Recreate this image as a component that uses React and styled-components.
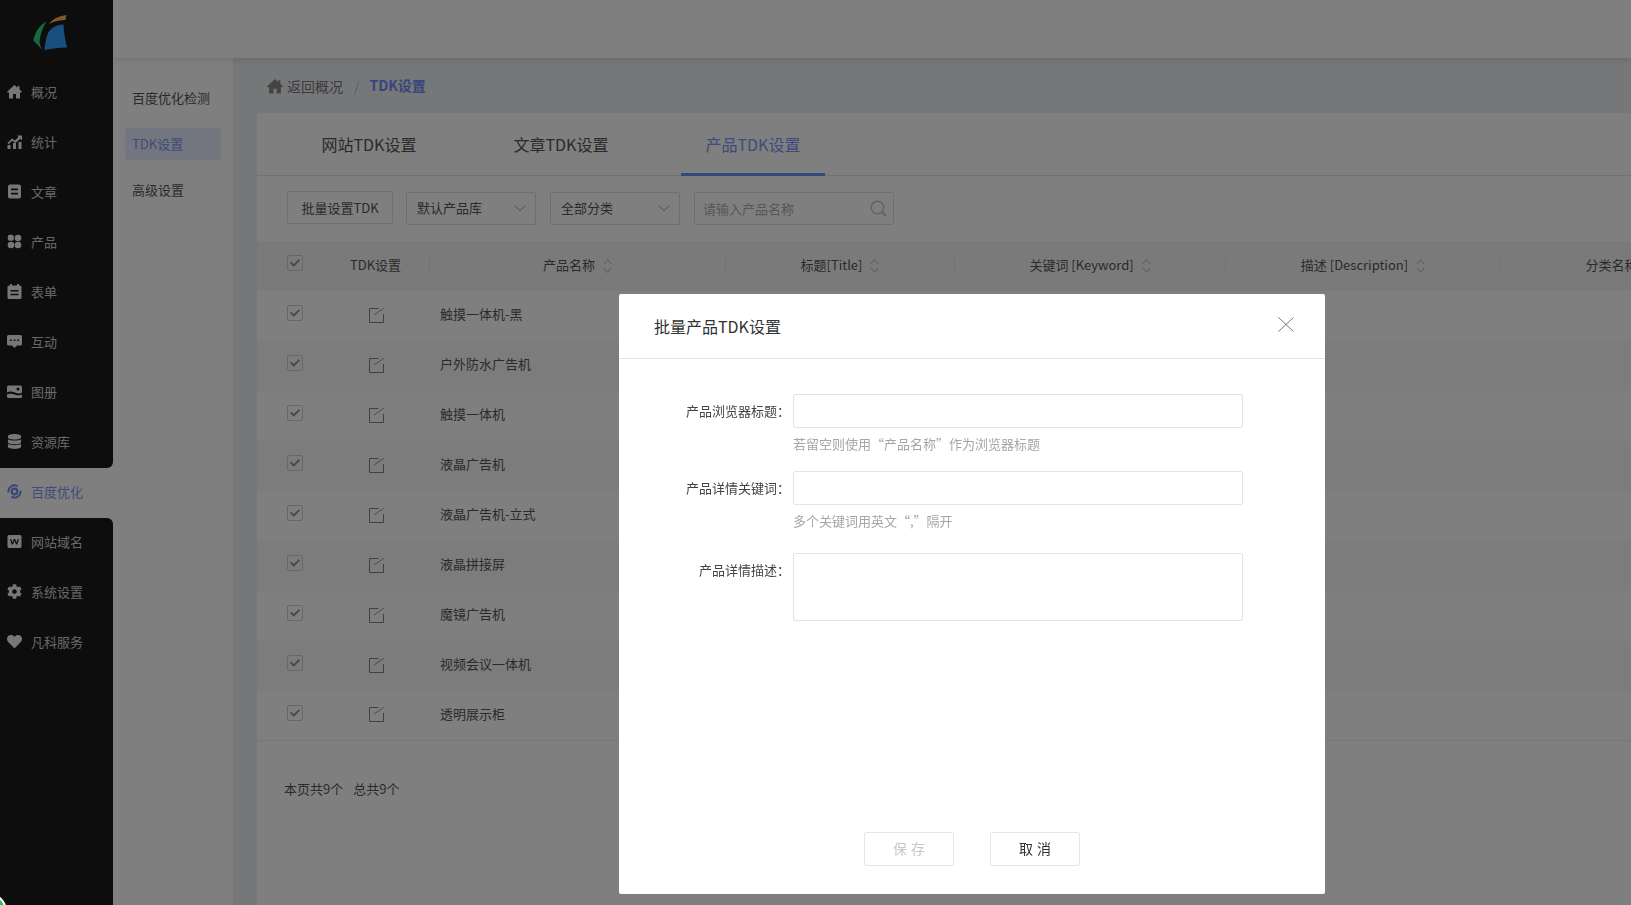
import React from "react";
import styled, { createGlobalStyle } from "styled-components";
import { FaCheck, FaDatabase, FaCog, FaHeart } from "react-icons/fa";

const GlobalStyle = createGlobalStyle`
  html, body {
    margin: 0;
    padding: 0;
    height: 100%;
    overflow: hidden;
    background: #fff;
    font-family: "Noto Sans CJK SC", "Open Sans", sans-serif;
    font-size: 13px;
    color: #555;
  }
  * {
    box-sizing: border-box;
  }
`;

const Page = styled.div`
  display: flex;
  width: 100vw;
  height: 100vh;
  overflow: hidden;
`;

const Sidebar = styled.aside`
  flex: 0 0 113px;
  display: flex;
  flex-direction: column;
  background: #fff;
`;

const SideGroup = styled.div`
  background: #1b1b1c;
  border-radius: ${(p) => (p.$bottom ? "0 6px 0 0" : "0 0 6px 0")};
  flex: ${(p) => (p.$bottom ? 1 : "none")};
`;

const LogoBox = styled.div`
  height: 68px;
  padding: 15px 0 0 33px;
`;

const SideItem = styled.div`
  height: 50px;
  display: flex;
  align-items: center;
  padding: 0 0 3px 7px;
  gap: 9px;
  color: ${(p) => (p.$active ? "#7f97f5" : "#d0d0d0")};
  background: ${(p) => (p.$active ? "#fff" : "transparent")};
  font-size: 13px;

  svg {
    flex: 0 0 15px;
    width: 15px;
    height: 15px;
    color: ${(p) => (p.$active ? "#6f8cf5" : "#eeeef2")};
  }
`;

const Main = styled.div`
  flex: 1;
  min-width: 0;
  display: flex;
  flex-direction: column;
`;

const TopBar = styled.header`
  flex: 0 0 58px;
  background: #fff;
  box-shadow: 0 2px 6px rgba(0, 0, 0, 0.12);
  position: relative;
`;

const Body = styled.div`
  flex: 1;
  min-height: 0;
  display: flex;
`;

const SubNav = styled.nav`
  flex: 0 0 120px;
  background: #fff;
  padding: 24px 12px 0;
`;

const SubItem = styled.div`
  height: 32px;
  line-height: 31px;
  margin-bottom: 14px;
  padding-left: 7px;
  border-radius: 2px;
  color: ${(p) => (p.$active ? "#7f97f5" : "#555")};
  background: ${(p) => (p.$active ? "#e6ebff" : "transparent")};
`;

const Content = styled.main`
  flex: 1;
  min-width: 0;
  background: #eceef2;
  padding-left: 24px;
  display: flex;
  flex-direction: column;
`;

const Breadcrumb = styled.div`
  flex: 0 0 55px;
  display: flex;
  align-items: center;
  padding: 1px 0 0 10px;
  font-size: 14px;
  color: #777;

  svg {
    width: 16px;
    height: 16px;
    margin-right: 4px;
    color: #888;
  }
`;

const CrumbSep = styled.span`
  margin: 0 10px 0 11px;
  color: #bbb;
`;

const CrumbNow = styled.b`
  color: #6f8cf5;
  font-weight: 700;
  margin-top: -2px;
`;

const Panel = styled.section`
  flex: 1;
  min-height: 0;
  background: #fff;
  overflow: hidden;
`;

const Tabs = styled.div`
  height: 63px;
  display: flex;
  gap: 48px;
  padding-left: 40px;
  border-bottom: 1px solid #e4e4e4;
`;

const Tab = styled.div`
  width: 144px;
  height: 63px;
  line-height: 62px;
  text-align: center;
  font-size: 16px;
  color: ${(p) => (p.$active ? "#7f97f5" : "#555")};
  border-bottom: 3px solid ${(p) => (p.$active ? "#6690ff" : "transparent")};
`;

const Toolbar = styled.div`
  height: 65px;
  display: flex;
  align-items: flex-start;
  padding: 15px 0 0 30px;
  gap: 13px;
`;

const BatchButton = styled.div`
  width: 106px;
  height: 33px;
  line-height: 31px;
  text-align: center;
  border: 1px solid #dfdfdf;
  border-radius: 2px;
  color: #555;
`;

const SelectBox = styled.div`
  width: 130px;
  height: 33px;
  margin: 1px 1px 0 0;
  padding: 0 9px 2px 10px;
  display: flex;
  align-items: center;
  justify-content: space-between;
  border: 1px solid #dfdfdf;
  border-radius: 2px;
  color: #555;
`;

const SearchBox = styled(SelectBox)`
  width: 200px;
  padding: 0 6px 0 8px;
  color: #adadad;
`;

const TableGrid = styled.div`
  width: 1482px;
  display: grid;
  grid-template-columns: 65px 108px 296px 229px 271px 275px 238px;
  height: 50px;
  align-items: center;
  background: ${(p) => (p.$head ? "#f5f5f5" : p.$alt ? "#f8f8f8" : "#fff")};
  border-bottom: ${(p) => (p.$last ? "1px solid #eee" : "none")};
`;

const CheckCell = styled.div`
  padding: 0 0 6px 30px;
  display: flex;
`;

const CheckBoxMark = styled.span`
  width: 16px;
  height: 16px;
  border: 1px solid #cfcfcf;
  border-radius: 2px;
  display: flex;
  align-items: center;
  justify-content: center;
  color: #94949a;

  svg {
    width: 10px;
    height: 10px;
  }
`;

const HeadCell = styled.div`
  height: 16px;
  display: flex;
  align-items: center;
  justify-content: center;
  gap: 8px;
  white-space: nowrap;
  border-right: ${(p) => (p.$divider ? "1px solid #e4e4e4" : "none")};
`;

const HeadLabel = styled.span`
  margin-bottom: 4px;
`;

const EditCell = styled.div`
  display: flex;
  justify-content: center;
  padding: 0 0 2px 1px;
  color: #808080;
`;

const NameCell = styled.div`
  padding: 0 0 5px 10px;
`;

const TableFoot = styled.div`
  display: flex;
  gap: 10px;
  padding: 39px 0 0 27px;
  line-height: 18px;
`;

const Overlay = styled.div`
  position: fixed;
  inset: 0;
  background: rgba(0, 0, 0, 0.5);
`;

const Modal = styled.div`
  position: fixed;
  left: 619px;
  top: 294px;
  width: 706px;
  height: 600px;
  background: #fff;
  border-radius: 2px;
  display: flex;
  flex-direction: column;
  color: #333;
`;

const ModalHead = styled.div`
  flex: 0 0 65px;
  display: flex;
  align-items: center;
  justify-content: space-between;
  padding: 0 31px 0 35px;
  border-bottom: 1px solid #e6e6e6;
  font-size: 16px;
  color: #333;

  svg {
    margin-bottom: 3px;
  }
`;

const ModalForm = styled.div`
  padding-top: 35px;
  flex: 1;
`;

const FormRow = styled.div`
  display: grid;
  grid-template-columns: 171px 450px;
  column-gap: 3px;
  margin-bottom: ${(p) => p.$tail}px;
`;

const FormLabel = styled.label`
  line-height: 33px;
  text-align: right;
  color: #444;
`;

const FormInput = styled.input`
  display: block;
  width: 100%;
  height: 34px;
  border: 1px solid #e3e3e6;
  border-radius: 2px;
  outline: none;
  background: #fff;
`;

const FormArea = styled.textarea`
  display: block;
  width: 100%;
  height: 68px;
  border: 1px solid #e3e3e6;
  border-radius: 2px;
  outline: none;
  resize: none;
  background: #fff;
`;

const FormHint = styled.div`
  margin-top: 7px;
  line-height: 18px;
  color: #a6a6a6;
`;

const ModalFoot = styled.div`
  display: flex;
  justify-content: center;
  gap: 36px;
  padding-bottom: 28px;
`;

const ModalButton = styled.button`
  width: 90px;
  height: 34px;
  padding: 0 0 2px 4px;
  border: 1px solid #e6e6ea;
  border-radius: 2px;
  background: #fff;
  font-family: inherit;
  font-size: 14px;
  letter-spacing: 4px;
  color: ${(p) => (p.disabled ? "#c8c8c8" : "#333")};
`;

const ChatBadge = styled.div`
  position: fixed;
  left: -33px;
  bottom: -27px;
  width: 40px;
  height: 40px;
  border-radius: 50%;
  background: #21c25e;
  border: 2px solid #fff;
`;

const Logo = () => (
  <svg width="34" height="35" viewBox="0 0 34 35">
    <path d="M13.700 6.300C6 11 2 17.500 0.300 25.300L9.300 34.700C6.500 31 6 27 7 23C8 17 10.500 11 13.700 6.300Z" fill="#2cd97e" />
    <path d="M16 9C20 3 27 1 33.500 0L32.500 5C27 5 22 6 16 9Z" fill="#ffb057" />
    <path d="M30.500 9.500C23 10 18 13 15 18C13 23 12 29 11.500 35C19 33.500 27 32.500 34 32.500C32 25 31 17 30.500 9.500Z" fill="#2e9eff" />
  </svg>
);

const HomeIcon = () => (
  <svg viewBox="0 0 15 15" fill="currentColor">
    <path d="M7.500 1L10.500 3.700V2H12.500V5.500L15 7.800L14.200 8.600H13V14.500H9V10H6V14.500H2V8.600H0.800L0 7.800Z" />
  </svg>
);

const ChartIcon = () => (
  <svg viewBox="0 0 15 15" fill="currentColor">
    <rect x="0.500" y="11" width="3" height="4" />
    <rect x="6" y="9" width="3" height="6" />
    <rect x="11.500" y="8" width="3" height="7" />
    <path d="M0.500 9L5 4.500L8 6.500L11.500 3L10 1.500H15V6.500L13.300 4.800L8.500 9L5.200 6.800L1.500 10.200Z" />
  </svg>
);

const DocIcon = () => (
  <svg viewBox="0 0 15 15" fill="currentColor">
    <path fillRule="evenodd" d="M3 0.500H12A2 2 0 0 1 14 2.500V12.500A2 2 0 0 1 12 14.500H3A2 2 0 0 1 1 12.500V2.500A2 2 0 0 1 3 0.500ZM4 4.500V6.300H11V4.500ZM4 8.700V10.500H11V8.700Z" />
  </svg>
);

const GridIcon = () => (
  <svg viewBox="0 0 15 15" fill="currentColor">
    <rect x="0.800" y="0.800" width="6" height="6" rx="1.800" />
    <circle cx="11" cy="4" r="3.300" />
    <circle cx="4" cy="11" r="3.300" />
    <circle cx="11" cy="11" r="3.300" />
  </svg>
);

const FormIcon = () => (
  <svg viewBox="0 0 15 15" fill="currentColor">
    <path fillRule="evenodd" d="M3 0H5V1.500H10V0H12V1.500H13A1.500 1.500 0 0 1 14.500 3V13.500A1.500 1.500 0 0 1 13 15H2A1.500 1.500 0 0 1 0.500 13.500V3A1.500 1.500 0 0 1 2 1.500H3ZM3.500 6V7.500H11.500V6ZM3.500 9.800V11.300H11.500V9.800Z" />
  </svg>
);

const ChatIcon = () => (
  <svg viewBox="0 0 15 15" fill="currentColor">
    <path fillRule="evenodd" d="M1.500 1H13.500A1.500 1.500 0 0 1 15 2.500V10A1.500 1.500 0 0 1 13.500 11.500H10L7.500 14L5 11.500H1.500A1.500 1.500 0 0 1 0 10V2.500A1.500 1.500 0 0 1 1.500 1ZM3 5.400V7.100H4.700V5.400ZM6.700 5.400V7.100H8.400V5.400ZM10.300 5.400V7.100H12V5.400Z" />
  </svg>
);

const AlbumIcon = () => (
  <svg viewBox="0 0 15 15" fill="currentColor">
    <path fillRule="evenodd" d="M1.500 1.500H13.500A1.500 1.500 0 0 1 15 3V8.500C11 12 5 5 0 8.500V3A1.500 1.500 0 0 1 1.500 1.500ZM11 3.500A1.500 1.500 0 1 0 11 6.500A1.500 1.500 0 1 0 11 3.500Z" />
    <path d="M0 10.500C5 7.500 10 13.500 15 10.500V12.500A1.500 1.500 0 0 1 13.500 14H1.500A1.500 1.500 0 0 1 0 12.500Z" />
  </svg>
);

const SeoIcon = () => (
  <svg viewBox="0 0 15 15" fill="none" stroke="currentColor">
    <circle cx="7.500" cy="7.500" r="2.800" strokeWidth="2.200" />
    <path d="M1.500 8.500A6 6 0 0 1 10.500 2.300" strokeWidth="2" />
    <path d="M13.500 6.500A6 6 0 0 1 4.500 12.700" strokeWidth="2" />
  </svg>
);

const DomainIcon = () => (
  <svg viewBox="0 0 15 15" fill="currentColor">
    <path fillRule="evenodd" d="M2 1H13A1.500 1.500 0 0 1 14.500 2.500V12.500A1.500 1.500 0 0 1 13 14H2A1.500 1.500 0 0 1 0.500 12.500V2.500A1.500 1.500 0 0 1 2 1ZM3 5L4.700 10.500H5.900L7.500 6.800L9.100 10.500H10.300L12 5H10.800L9.700 8.600L8.100 5H6.900L5.300 8.600L4.200 5Z" />
  </svg>
);

const EditIcon = () => (
  <svg width="15" height="15" viewBox="0 0 15 15" fill="none" stroke="currentColor">
    <path d="M9.500 0.500H0.500V14.500H14.500V6" />
    <path d="M5 7L14.800 0.300" strokeWidth="0.800" />
  </svg>
);

const SortIcon = () => (
  <svg width="9" height="16" viewBox="0 0 9 16" fill="none" stroke="#b4b4b4">
    <path d="M1 6L4.500 1.500L8 6" />
    <path d="M1 10L4.500 14.500L8 10" />
  </svg>
);

const Chevron = () => (
  <svg width="12" height="8" viewBox="0 0 12 8" fill="none" stroke="#aaa">
    <path d="M0.500 1L6 7L11.500 1" />
  </svg>
);

const SearchIcon = () => (
  <svg width="17" height="17" viewBox="0 0 17 17" fill="none" stroke="#c4c4c4" strokeWidth="1.400">
    <circle cx="7.500" cy="7.500" r="6.200" />
    <path d="M12 12L16 16" strokeWidth="1.800" />
  </svg>
);

const CloseIcon = () => (
  <svg width="16" height="15" viewBox="0 0 16 15" fill="none" stroke="#666" strokeWidth="0.900">
    <path d="M0.500 0.500L15.500 14.500M15.500 0.500L0.500 14.500" />
  </svg>
);

const topMenu = [
  ["概况", <HomeIcon />],
  ["统计", <ChartIcon />],
  ["文章", <DocIcon />],
  ["产品", <GridIcon />],
  ["表单", <FormIcon />],
  ["互动", <ChatIcon />],
  ["图册", <AlbumIcon />],
  ["资源库", <FaDatabase />],
];

const bottomMenu = [
  ["网站域名", <DomainIcon />],
  ["系统设置", <FaCog />],
  ["凡科服务", <FaHeart />],
];

const columns = [
  ["TDK设置", false],
  ["产品名称", true],
  ["标题[Title]", true],
  ["关键词 [Keyword]", true],
  ["描述 [Description]", true],
  ["分类名称", true],
];

const products = [
  "触摸一体机-黑",
  "户外防水广告机",
  "触摸一体机",
  "液晶广告机",
  "液晶广告机-立式",
  "液晶拼接屏",
  "魔镜广告机",
  "视频会议一体机",
  "透明展示柜",
];

const CheckBox = () => (
  <CheckCell>
    <CheckBoxMark>
      <FaCheck />
    </CheckBoxMark>
  </CheckCell>
);

const App = () => {
  return (
    <>
      <GlobalStyle />
      <Page>
        <Sidebar>
          <SideGroup>
            <LogoBox>
              <Logo />
            </LogoBox>
            {topMenu.map(([label, icon]) => (
              <SideItem key={label}>
                {icon}
                {label}
              </SideItem>
            ))}
          </SideGroup>
          <SideItem $active>
            <SeoIcon />
            百度优化
          </SideItem>
          <SideGroup $bottom>
            {bottomMenu.map(([label, icon]) => (
              <SideItem key={label}>
                {icon}
                {label}
              </SideItem>
            ))}
          </SideGroup>
        </Sidebar>
        <Main>
          <TopBar />
          <Body>
            <SubNav>
              <SubItem>百度优化检测</SubItem>
              <SubItem $active>TDK设置</SubItem>
              <SubItem>高级设置</SubItem>
            </SubNav>
            <Content>
              <Breadcrumb>
                <HomeIcon />
                返回概况
                <CrumbSep>/</CrumbSep>
                <CrumbNow>TDK设置</CrumbNow>
              </Breadcrumb>
              <Panel>
                <Tabs>
                  <Tab>网站TDK设置</Tab>
                  <Tab>文章TDK设置</Tab>
                  <Tab $active>产品TDK设置</Tab>
                </Tabs>
                <Toolbar>
                  <BatchButton>批量设置TDK</BatchButton>
                  <SelectBox>
                    默认产品库
                    <Chevron />
                  </SelectBox>
                  <SelectBox>
                    全部分类
                    <Chevron />
                  </SelectBox>
                  <SearchBox>
                    请输入产品名称
                    <SearchIcon />
                  </SearchBox>
                </Toolbar>
                <TableGrid $head>
                  <CheckBox />
                  {columns.map(([title, sortable], i) => (
                    <HeadCell key={title} $divider={i < 5}>
                      <HeadLabel>{title}</HeadLabel>
                      {sortable && <SortIcon />}
                    </HeadCell>
                  ))}
                </TableGrid>
                {products.map((name, i) => (
                  <TableGrid key={name} $alt={i % 2 === 1} $last={i === products.length - 1}>
                    <CheckBox />
                    <EditCell>
                      <EditIcon />
                    </EditCell>
                    <NameCell>{name}</NameCell>
                  </TableGrid>
                ))}
                <TableFoot>
                  <span>本页共9个</span>
                  <span>总共9个</span>
                </TableFoot>
              </Panel>
            </Content>
          </Body>
        </Main>
      </Page>
      <Overlay />
      <ChatBadge />
      <Modal>
        <ModalHead>
          批量产品TDK设置
          <CloseIcon />
        </ModalHead>
        <ModalForm>
          <FormRow $tail={18}>
            <FormLabel>产品浏览器标题：</FormLabel>
            <div>
              <FormInput />
              <FormHint>若留空则使用“产品名称”作为浏览器标题</FormHint>
            </div>
          </FormRow>
          <FormRow $tail={23}>
            <FormLabel>产品详情关键词：</FormLabel>
            <div>
              <FormInput />
              <FormHint>多个关键词用英文“,”隔开</FormHint>
            </div>
          </FormRow>
          <FormRow $tail={0}>
            <FormLabel>产品详情描述：</FormLabel>
            <FormArea />
          </FormRow>
        </ModalForm>
        <ModalFoot>
          <ModalButton disabled>保存</ModalButton>
          <ModalButton>取消</ModalButton>
        </ModalFoot>
      </Modal>
    </>
  );
};

export default App;
